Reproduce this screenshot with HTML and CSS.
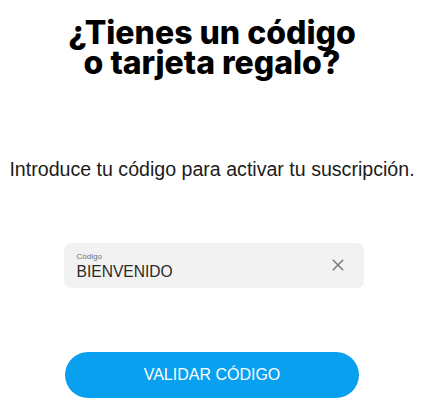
FILE: index.html
```html
<!DOCTYPE html>
<html lang="es">
<head>
<meta charset="utf-8">
<title>Código regalo</title>
<link rel="stylesheet" href="styles.css">
</head>
<body>
<main class="page">
  <h1 class="title">¿Tienes un código<br>o tarjeta regalo?</h1>
  <p class="intro">Introduce tu código para activar tu suscripción.</p>
  <div class="field">
    <div class="field-text">
      <span class="field-label">Código</span>
      <span class="field-value">BIENVENIDO</span>
    </div>
    <svg class="clear" width="12" height="12" viewBox="0 0 12 12" aria-hidden="true">
      <path d="M0.8 0.8 L11.2 11.2 M11.2 0.8 L0.8 11.2" stroke="#7a7a7a" stroke-width="1.5" fill="none"/>
    </svg>
  </div>
  <button class="btn" type="button">VALIDAR CÓDIGO</button>
</main>
</body>
</html>
```

FILE: styles.css
```css
html, body {
  margin: 0;
  padding: 0;
  background: #ffffff;
}
.page {
  width: 424px;
  display: flex;
  flex-direction: column;
  align-items: center;
  font-family: "Liberation Sans", Arial, sans-serif;
  color: #1a1a1a;
}
.title {
  margin: 18px 0 0;
  font-family: Inter, "Liberation Sans", sans-serif;
  font-weight: 800;
  font-size: 32px;
  line-height: 30px;
  text-align: center;
  color: #000;
  letter-spacing: 0;
}
.intro {
  margin: 80px 0 0;
  font-size: 19.6px;
  line-height: 22px;
  color: #1c1c1c;
  text-align: center;
  white-space: nowrap;
}
.field {
  margin-top: 63px;
  margin-left: 3px;
  width: 300px;
  height: 45px;
  box-sizing: border-box;
  background: #f2f2f2;
  border-radius: 7px;
  display: flex;
  align-items: center;
  padding: 0 20px 0 13px;
}
.field-text {
  flex: 1;
  display: flex;
  flex-direction: column;
}
.field-label {
  font-size: 8px;
  line-height: 9px;
  color: #6f6f6f;
}
.field-value {
  font-size: 15.6px;
  line-height: 17px;
  color: #2a2a2a;
  margin-top: 2px;
}
.clear {
  display: block;
  margin-top: -2px;
}
.btn {
  margin-top: 64px;
  width: 294px;
  height: 46px;
  border: none;
  border-radius: 23px;
  background: #0aa0f0;
  color: #ffffff;
  font-family: "Liberation Sans", Arial, sans-serif;
  font-size: 16px;
  padding: 0;
}
```
